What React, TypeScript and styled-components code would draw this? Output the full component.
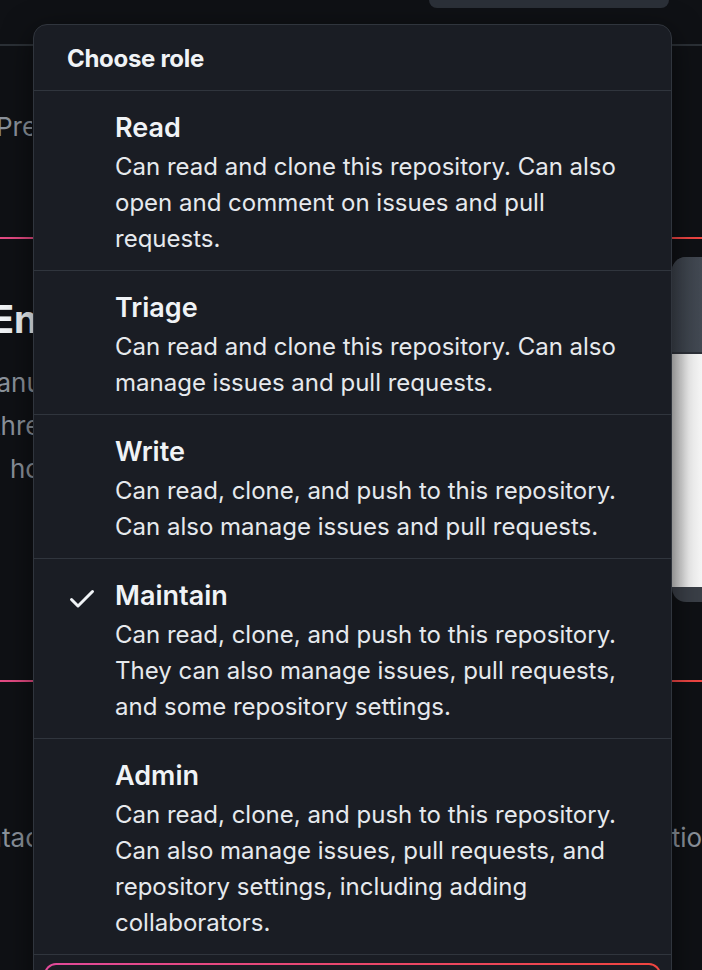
import styled, { createGlobalStyle } from "styled-components";

const GlobalStyle = createGlobalStyle`
    html, body {
        margin: 0;
        padding: 0;
        background: #0f1115;
    }
    * {
        box-sizing: border-box;
    }
`;

type Role = {
    name: string;
    description: string;
    selected?: boolean;
};

const roles: Role[] = [
    {
        name: "Read",
        description:
            "Can read and clone this repository. Can also open and comment on issues and pull requests.",
    },
    {
        name: "Triage",
        description:
            "Can read and clone this repository. Can also manage issues and pull requests.",
    },
    {
        name: "Write",
        description:
            "Can read, clone, and push to this repository. Can also manage issues and pull requests.",
    },
    {
        name: "Maintain",
        description:
            "Can read, clone, and push to this repository. They can also manage issues, pull requests, and some repository settings.",
        selected: true,
    },
    {
        name: "Admin",
        description:
            "Can read, clone, and push to this repository. Can also manage issues, pull requests, and repository settings, including adding collaborators.",
    },
];

const CheckIcon = () => (
    <svg width="32" height="32" viewBox="0 0 16 16" fill="#f0f3f6">
        <path d="M13.78 4.22a.75.75 0 0 1 0 1.06l-7.25 7.25a.75.75 0 0 1-1.06 0L2.22 9.28a.751.751 0 0 1 .018-1.042.751.751 0 0 1 1.042-.018L6 10.94l6.72-6.72a.75.75 0 0 1 1.06 0Z" />
    </svg>
);

export default function App() {
    return (
        <>
            <GlobalStyle />
            <Page>
                <TopBar>
                    <TopButton />
                </TopBar>
                <EdgeStrip>
                    <PreviewLabel>Preview</PreviewLabel>
                </EdgeStrip>
                <FeatureCard>
                    <FeatureText>
                        <FeatureTitle>Enterprise</FeatureTitle>
                        <FeatureLine shift={-27}>Manually</FeatureLine>
                        <FeatureLine shift={-8}>three</FeatureLine>
                        <FeatureLine shift={10}>how</FeatureLine>
                    </FeatureText>
                    <FeatureImage>
                        <ImageHeader />
                        <ImageBody />
                    </FeatureImage>
                </FeatureCard>
                <FooterRow>
                    <EdgeStrip>
                        <FooterText shift={-48}>Contact</FooterText>
                    </EdgeStrip>
                    <EdgeStrip>
                        <FooterText shift={-36}>Options</FooterText>
                    </EdgeStrip>
                </FooterRow>

                <Menu>
                    <MenuHeader>Choose role</MenuHeader>
                    {roles.map((role) => (
                        <MenuItem key={role.name}>
                            <CheckSlot>{role.selected && <CheckIcon />}</CheckSlot>
                            <div>
                                <RoleName>{role.name}</RoleName>
                                <RoleDescription>{role.description}</RoleDescription>
                            </div>
                        </MenuItem>
                    ))}
                    <MenuFooter>
                        <GradientButton />
                    </MenuFooter>
                </Menu>
            </Page>
        </>
    );
}

const Page = styled.div`
    position: relative;
    width: 702px;
    height: 970px;
    overflow: hidden;
    background: #0f1115;
    font-family: Inter, "Noto Sans", "DejaVu Sans", sans-serif;
    -webkit-font-smoothing: antialiased;
`;

const TopBar = styled.div`
    height: 46px;
    border-bottom: 2px solid #2b3036;
    display: flex;
    justify-content: flex-end;
    align-items: flex-start;
    padding-right: 33px;
`;

const TopButton = styled.div`
    width: 240px;
    height: 8px;
    background: #2b3038;
    border-radius: 0 0 10px 10px;
`;

const EdgeStrip = styled.div`
    width: 32px;
    overflow: hidden;
`;

const PreviewLabel = styled.div`
    margin: 63px 0 0 -4px;
    height: 36px;
    line-height: 36px;
    font-size: 26px;
    color: #8b929b;
    white-space: nowrap;
`;

const FeatureCard = styled.div`
    margin: 92px -30px 0 -30px;
    height: 445px;
    border: 2px solid transparent;
    border-radius: 12px;
    background:
        linear-gradient(#0f1115, #0f1115) padding-box,
        linear-gradient(90deg, #e24a86, #f0453f) border-box;
    display: flex;
    justify-content: space-between;
    align-items: flex-start;
`;

const FeatureText = styled.div`
    width: 33px;
    margin-left: 28px;
    overflow: hidden;
    padding-top: 58px;
    white-space: nowrap;
`;

const FeatureTitle = styled.div`
    font-size: 38px;
    line-height: 44px;
    font-weight: 700;
    color: #f0f3f6;
    margin: 0 0 20px -9px;
`;

const FeatureLine = styled.div<{ shift: number }>`
    font-size: 26px;
    line-height: 43px;
    color: #8b929b;
    margin-left: ${(p) => p.shift}px;
`;

const FeatureImage = styled.div`
    width: 58px;
    margin-top: 18px;
    border-radius: 14px 0 0 14px;
    overflow: hidden;
    background: #3a3f47;
    padding-bottom: 15px;
`;

const ImageHeader = styled.div`
    height: 97px;
    background: linear-gradient(90deg, #3b414a, #4a515b);
    border-bottom: 2px solid #2d3139;
`;

const ImageBody = styled.div`
    height: 233px;
    background: linear-gradient(90deg, #c9c9c9, #f2f2f2 30%, #ffffff);
`;

const FooterRow = styled.div`
    margin-top: 138px;
    display: flex;
    justify-content: space-between;
    & > div:last-child {
        width: 30px;
    }
`;

const FooterText = styled.div<{ shift: number }>`
    font-size: 26px;
    line-height: 36px;
    color: #8b929b;
    white-space: nowrap;
    margin-left: ${(p) => p.shift}px;
`;

const Menu = styled.div`
    position: absolute;
    top: 24px;
    left: 33px;
    width: 639px;
    background: #1a1d24;
    border: 1px solid #30353d;
    border-radius: 14px;
    box-shadow: 0 8px 30px rgba(0, 0, 0, 0.55);
    color: #f0f3f6;
`;

const MenuHeader = styled.div`
    padding: 16px 33px 13px;
    font-size: 24px;
    line-height: 36px;
    font-weight: 700;
    letter-spacing: -0.3px;
    border-bottom: 1px solid #30353d;
`;

const MenuItem = styled.div`
    display: grid;
    grid-template-columns: 32px 1fr;
    column-gap: 17px;
    padding: 16px 32px 13px 32px;
    border-bottom: 1px solid #30353d;
`;

const CheckSlot = styled.div`
    height: 42px;
    display: flex;
    align-items: center;
    padding-top: 4px;
`;

const RoleName = styled.div`
    font-size: 27px;
    line-height: 42px;
    font-weight: 600;
    color: #f0f3f6;
`;

const RoleDescription = styled.div`
    font-size: 24px;
    line-height: 36px;
    color: #e6e9ed;
`;

const MenuFooter = styled.div`
    padding: 8px 10px;
`;

const GradientButton = styled.div`
    height: 56px;
    border: 2px solid transparent;
    border-radius: 12px;
    background:
        linear-gradient(#1a1d24, #1a1d24) padding-box,
        linear-gradient(90deg, #e24a9a, #f0453f) border-box;
`;
